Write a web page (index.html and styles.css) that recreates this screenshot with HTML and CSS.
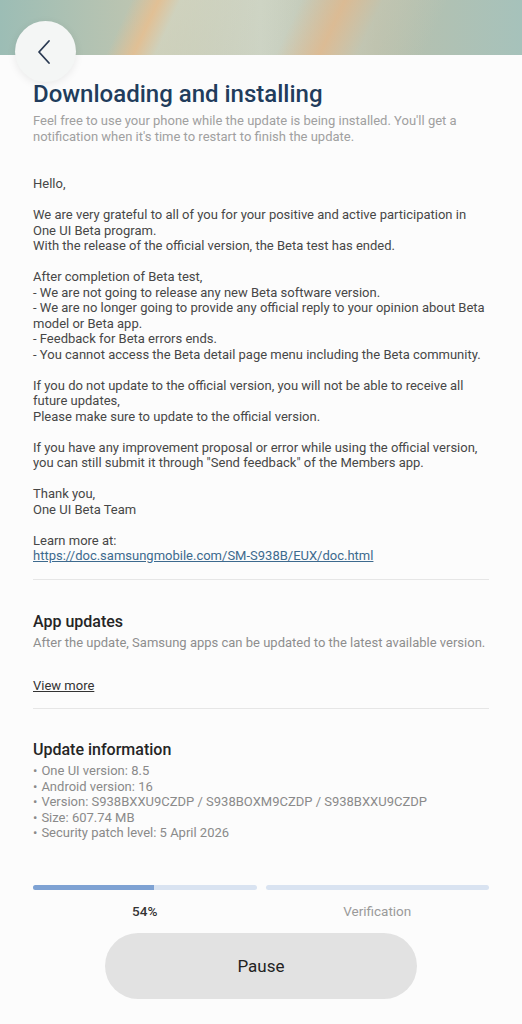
FILE: index.html
```html
<!DOCTYPE html>
<html>
<head>
<meta charset="UTF-8">
<title>Software update</title>
<link rel="stylesheet" href="styles.css">
</head>
<body>

<div class="banner"></div>
<button class="back" aria-label="Back">
  <svg width="16" height="26" viewBox="0 0 16 26"><path d="M13 2 L3 13 L13 24" fill="none" stroke="#2a3a52" stroke-width="1.8" stroke-linecap="round" stroke-linejoin="round"/></svg>
</button>

<div class="page">
  <h1 class="title">Downloading and installing</h1>
  <p class="lead">Feel free to use your phone while the update is being installed. You'll get a notification when it's time to restart to finish the update.</p>

  <div class="notes">
    <p>Hello,</p>
    <p>We are very grateful to all of you for your positive and active participation in One UI Beta program.<br>With the release of the official version, the Beta test has ended.</p>
    <p>After completion of Beta test,<br>- We are not going to release any new Beta software version.<br>- We are no longer going to provide any official reply to your opinion about Beta model or Beta app.<br>- Feedback for Beta errors ends.<br>- You cannot access the Beta detail page menu including the Beta community.</p>
    <p>If you do not update to the official version, you will not be able to receive all future updates,<br>Please make sure to update to the official version.</p>
    <p>If you have any improvement proposal or error while using the official version, you can still submit it through "Send feedback" of the Members app.</p>
    <p>Thank you,<br>One UI Beta Team</p>
    <p>Learn more at:<br><a class="link" href="#">https://doc.samsungmobile.com/SM-S938B/EUX/doc.html</a></p>
  </div>

  <div class="section apps">
    <h2>App updates</h2>
    <p class="sub">After the update, Samsung apps can be updated to the latest available version.</p>
    <a class="more" href="#">View more</a>
  </div>

  <div class="section info">
    <h2>Update information</h2>
    <ul class="facts">
      <li>One UI version: 8.5</li>
      <li>Android version: 16</li>
      <li>Version: S938BXXU9CZDP / S938BOXM9CZDP / S938BXXU9CZDP</li>
      <li>Size: 607.74 MB</li>
      <li>Security patch level: 5 April 2026</li>
    </ul>
  </div>

  <div class="progress">
    <div class="step">
      <div class="track"><div class="fill" style="width:54%"></div></div>
      <span class="label now">54%</span>
    </div>
    <div class="step">
      <div class="track"></div>
      <span class="label">Verification</span>
    </div>
  </div>

  <div class="actions">
    <button class="pause">Pause</button>
  </div>
</div>

</body>
</html>
```

FILE: styles.css
```css
body {
  margin: 0;
  background-color: #fcfcfc;
  font-family: Roboto, "Noto Sans", sans-serif;
  color: #444;
}

.banner {
  height: 55px;
  background:
    linear-gradient(115deg, transparent 0%, transparent 24%, rgba(236,190,140,0.75) 29%, rgba(214,216,196,0.6) 33%, transparent 55%, rgba(226,184,140,0.8) 63%, rgba(200,200,180,0.5) 70%, transparent 82%),
    linear-gradient(90deg, #9cbdb5 0%, #c2c6b0 30%, #ccd3c4 50%, #b9c0ac 72%, #a6c2bb 100%);
}

.back {
  position: absolute;
  left: 15px;
  top: 21px;
  width: 61px;
  height: 61px;
  border-radius: 50%;
  border: none;
  background-color: #f4f6f5;
  box-shadow: 0 2px 8px rgba(0,0,0,0.08);
  display: flex;
  align-items: center;
  justify-content: center;
  padding: 0 4px 0 0;
}

.page {
  padding: 0 33px;
}

.title {
  margin: 23px 0 0;
  font-size: 24px;
  font-weight: 500;
  color: #213c5c;
  line-height: 32px;
}

.lead {
  margin: 3px 0 0;
  font-size: 13px;
  line-height: 16px;
  color: #a0a0a0;
}

.notes {
  margin-top: 31px;
  font-size: 13px;
  line-height: 15.5px;
  color: #474747;
}

.notes p {
  margin: 0 0 15.5px;
}

.link {
  color: #3d6a8e;
}

.section {
  border-top: 1px solid #e6e6e6;
}

.section h2 {
  margin: 0;
  font-size: 16px;
  font-weight: 500;
  color: #252525;
  line-height: 20px;
}

.apps {
  padding-top: 32px;
  padding-bottom: 14px;
}

.sub {
  margin: 3px 0 0;
  font-size: 13px;
  line-height: 16px;
  color: #8e8e8e;
}

.more {
  display: inline-block;
  margin-top: 27px;
  font-size: 13px;
  color: #333;
}

.info {
  padding-top: 31px;
}

.facts {
  margin: 3px 0 0;
  padding: 0;
  list-style: none;
  font-size: 13px;
  line-height: 15.5px;
  color: #8a8a8a;
}

.facts li::before {
  content: "\2022";
  margin-right: 4px;
}

.progress {
  display: flex;
  gap: 9px;
  margin-top: 44px;
}

.step {
  flex: 1;
  display: flex;
  flex-direction: column;
  align-items: center;
}

.track {
  align-self: stretch;
  height: 5px;
  border-radius: 3px;
  background-color: #d9e3f1;
  overflow: hidden;
}

.fill {
  height: 100%;
  background-color: #7ea2d3;
}

.label {
  margin-top: 13px;
  font-size: 13.5px;
  color: #9a9a9a;
}

.label.now {
  font-weight: 500;
  color: #333;
}

.actions {
  display: flex;
  justify-content: center;
  margin-top: 14px;
}

.pause {
  width: 312px;
  height: 66px;
  border: none;
  border-radius: 33px;
  background-color: #e2e2e2;
  font-family: Roboto, "Noto Sans", sans-serif;
  font-size: 17px;
  color: #222;
}
```
